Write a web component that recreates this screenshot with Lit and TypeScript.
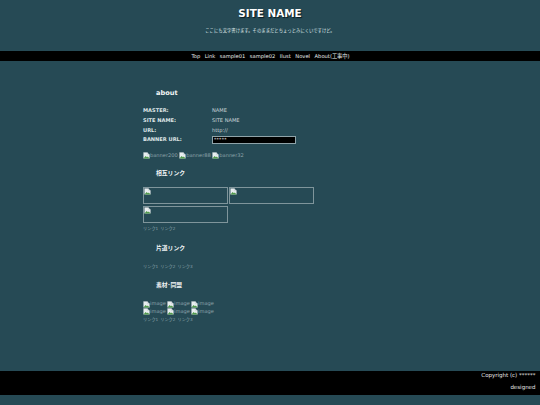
import { LitElement, html, css, svg } from "lit";
import { customElement } from "lit/decorators.js";

const broken = svg`<svg class="bi" viewBox="0 0 16 16" width="7" height="7"><path d="M1 1h9l5 5v9H1z" fill="#e8eef0"/><path d="M1 15l5-6 3 3 2-2 4 5z" fill="#4f9a4a"/><path d="M1 1h9v5h5" fill="none" stroke="#b9c4c8"/></svg>`;

@customElement("app-root")
export class AppRoot extends LitElement {
  static styles = css`
    :host { display: block; width: 540px; height: 405px; background: #264a55; overflow: hidden;
      font-family: "DejaVu Sans", sans-serif; font-size: 5.4px; line-height: 1.4; color: #dfe6e8; }
    .head { height: 51px; box-sizing: border-box; padding-top: 5.5px; text-align: center; }
    h1 { margin: 0; font-size: 10.4px; line-height: 14px; font-weight: 700; color: #fff; text-shadow: 1px 1px 1px #0a1a20; }
    .sub { margin-top: 7px; font-size: 4.35px; line-height: 8px; font-family: "DejaVu Sans", "Noto Sans CJK JP", sans-serif; }
    nav { height: 10px; background: #000; display: flex; justify-content: center; gap: 4.5px; padding-left: 1px; line-height: 10px; font-size: 5.2px; color: #e8eeef;
      font-family: "DejaVu Sans", "Noto Sans CJK JP", sans-serif; }
    main { width: 254px; margin-left: 143px; height: 310px; box-sizing: border-box; padding-top: 27.5px; font-family: "DejaVu Sans", "Noto Sans CJK JP", sans-serif; }
    h2 { margin: 0 0 0 13px; font-size: 6.6px; line-height: 9px; font-weight: 700; color: #f2f5f6; }
    h2.cjk { font-size: 5.8px; }
    .info { margin-top: 8.5px; display: grid; grid-template-columns: 69px 1fr; grid-auto-rows: 9.7px; align-items: center; }
    .info b { font-size: 5.1px; font-weight: 700; }
    .info span { font-size: 5.1px; color: #c9d4d7; }
    .pw { width: 84px; height: 8px; box-sizing: border-box; background: #000; border: 1px solid #8fa3a9; color: #e8e8e8; font-size: 4.5px; line-height: 6px; padding-left: 1px; letter-spacing: .3px; }
    .banners { display: flex; gap: 1.5px; margin-top: 6px; color: #8ea4ab; font-size: 5.1px; height: 9px; align-items: center; }
    .im { display: inline-flex; align-items: center; white-space: nowrap; }
    .bi { flex: none; }
    .sec1 { margin-top: 9px; }
    .boxes { margin-top: 9.5px; display: flex; flex-wrap: wrap; gap: 2px 1px; width: 172px; }
    .box { width: 85px; height: 17px; box-sizing: border-box; border: 1px solid #7f959b; padding: 0; }
    .links { color: #8aa2a9; font-size: 4.2px; line-height: 8px; display: flex; gap: 2px; }
    .l1 { margin-top: 2px; }
    .sec2 { margin-top: 11px; }
    .l2 { margin-top: 9.5px; }
    .sec3 { margin-top: 10px; }
    .imgs { margin-top: 10.5px; margin-bottom: 1px; display: grid; grid-template-columns: repeat(3, 24px); grid-auto-rows: 7.5px; width: 72px; color: #8ea4ab; font-size: 5.1px; align-items: center; }
    footer { height: 24px; background: #000; box-sizing: border-box; padding: 0 4.5px 0 0; text-align: right; font-size: 5.5px; line-height: 8px; color: #e4e4e4; }
    footer div + div { margin-top: 3.5px; }
  `;
  private img(label: string) {
    return html`<span class="im">${broken}${label}</span>`;
  }
  render() {
    return html`
      <div class="head">
        <h1>SITE NAME</h1>
        <div class="sub">ここにも文字書けます。そのままだとちょっとみにくいですけど。</div>
      </div>
      <nav>${["Top", "Link", "sample01", "sample02", "Ilust", "Novel", "About(工事中)"].map((t) => html`<span>${t}</span>`)}</nav>
      <main>
        <h2>about</h2>
        <div class="info">
          <b>MASTER:</b><span>NAME</span>
          <b>SITE NAME:</b><span>SITE NAME</span>
          <b>URL:</b><span>http://</span>
          <b>BANNER URL:</b><div class="pw">*****</div>
        </div>
        <div class="banners">${this.img("banner200")}${this.img("banner88")}${this.img("banner32")}</div>
        <h2 class="sec1 cjk">相互リンク</h2>
        <div class="boxes">
          <div class="box">${broken}</div><div class="box">${broken}</div><div class="box">${broken}</div>
        </div>
        <div class="links l1"><span>リンク1</span><span>リンク2</span></div>
        <h2 class="sec2 cjk">片道リンク</h2>
        <div class="links l2"><span>リンク1</span><span>リンク2</span><span>リンク3</span></div>
        <h2 class="sec3 cjk">素材･同盟</h2>
        <div class="imgs">${[1, 2, 3, 4, 5, 6].map(() => this.img("image"))}</div>
        <div class="links"><span>リンク1</span><span>リンク2</span><span>リンク3</span></div>
      </main>
      <footer><div>Copyright (c) ******</div><div>designed</div></footer>
    `;
  }
}
